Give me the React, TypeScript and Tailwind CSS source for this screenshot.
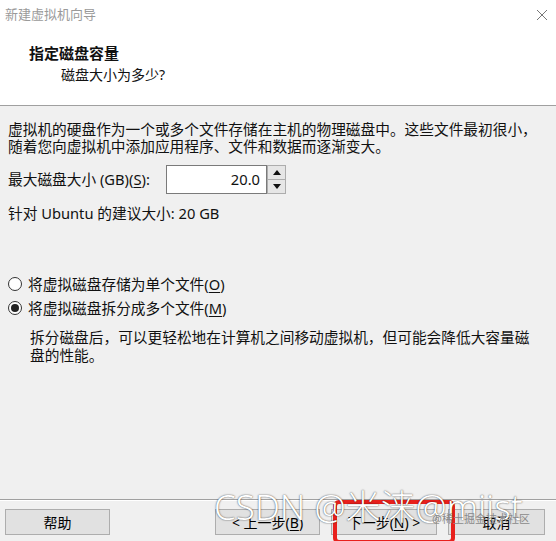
import React, { useState } from "react";

const FONT = "font-['Noto_Sans','Noto_Sans_CJK_SC',sans-serif]";

function Radio({ checked, label, hot }: { checked: boolean; label: string; hot: string }) {
	return (
		<div className="flex items-center h-[20px] gap-[6px] pl-[8px]">
			<span className="w-[14px] h-[14px] rounded-full border border-[#333] bg-white flex items-center justify-center">
				{checked && <span className="w-[8px] h-[8px] rounded-full bg-[#222]"></span>}
			</span>
			<span>
				{label}(<span className="underline underline-offset-2">{hot}</span>)
			</span>
		</div>
	);
}

function Btn({ children, className = "" }: { children: React.ReactNode; className?: string }) {
	return (
		<button className={`h-[26px] bg-[#e1e1e1] border border-[#adadad] text-[14px] text-black flex items-center justify-center ${className}`}>
			{children}
		</button>
	);
}

export default function App() {
	const [size] = useState("20.0");

	return (
		<div className={`relative w-[556px] h-[541px] bg-[#f0f0f0] flex flex-col overflow-hidden text-[#111] ${FONT}`}>
			{/* header */}
			<div className="bg-white h-[106px] border-b border-[#a0a0a0] flex flex-col">
				<div className="flex items-center justify-between h-[30px] pl-[5px] pr-[8px]">
					<span className="text-[13px] text-[#9a9a9a]">新建虚拟机向导</span>
					<svg width="12" height="12" viewBox="0 0 12 12" className="stroke-[#777]">
						<path d="M1 1 L11 11 M11 1 L1 11" strokeWidth="1" fill="none" />
					</svg>
				</div>
				<div className="pl-[29px] mt-[13px] text-[15px] font-bold leading-[20px]">指定磁盘容量</div>
				<div className="pl-[61px] mt-[2px] text-[14px] leading-[20px]">磁盘大小为多少?</div>
			</div>

			{/* body */}
			<div className="px-[8px] pt-[15px] text-[14.7px] leading-[17px]">
				<p>虚拟机的硬盘作为一个或多个文件存储在主机的物理磁盘中。这些文件最初很小，</p>
				<p>随着您向虚拟机中添加应用程序、文件和数据而逐渐变大。</p>

				<div className="flex items-center mt-[10px] h-[29px]">
					<span className="w-[158px]">
						最大磁盘大小 (GB)(<span className="underline underline-offset-2">S</span>):
					</span>
					<div className="h-[29px] w-[101px] bg-white border border-[#7a7a7a] flex items-center justify-end pr-[6px]">
						{size}
					</div>
					<div className="flex flex-col h-[29px] w-[19px] border border-[#adadad] bg-[#e6e6e6]">
						<div className="flex-1 flex items-center justify-center border-b border-[#adadad]">
							<svg width="8" height="5" viewBox="0 0 8 5">
								<path d="M0 5 L4 0 L8 5 Z" fill="#111" />
							</svg>
						</div>
						<div className="flex-1 flex items-center justify-center">
							<svg width="8" height="5" viewBox="0 0 8 5">
								<path d="M0 0 L4 5 L8 0 Z" fill="#111" />
							</svg>
						</div>
					</div>
				</div>

				<p className="mt-[11px]">针对 Ubuntu 的建议大小: 20 GB</p>
			</div>

			{/* options */}
			<div className="mt-[52px] text-[14.7px] flex flex-col gap-[4px]">
				<Radio checked={false} label="将虚拟磁盘存储为单个文件" hot="O" />
				<Radio checked={true} label="将虚拟磁盘拆分成多个文件" hot="M" />
			</div>
			<div className="pl-[30px] pr-[8px] mt-[10px] text-[14.7px] leading-[18px]">
				<p>拆分磁盘后，可以更轻松地在计算机之间移动虚拟机，但可能会降低大容量磁</p>
				<p>盘的性能。</p>
			</div>

			{/* footer */}
			<div className="mt-auto border-t border-[#a0a0a0]">
				<div className="border-t border-white flex items-center pt-[8px] pb-[6px] pl-[5px]">
					<Btn className="w-[105px]">帮助</Btn>
					<Btn className="w-[105px] ml-[105px]">&lt; 上一步(<span className="underline underline-offset-2">B</span>)</Btn>
					<Btn className="w-[106px] ml-[11px]">下一步(<span className="underline underline-offset-2">N</span>) &gt;</Btn>
					<Btn className="w-[97px] ml-[11px]">取消</Btn>
				</div>
			</div>

			{/* watermark + highlight */}
			<div className="absolute left-[333px] top-[500px] w-[122px] h-[44px] border-[4px] border-[#e8201c] rounded-[6px]"></div>
			<div className="absolute left-[214px] top-[484px] text-[35px] leading-[46px] font-light text-white whitespace-nowrap [text-shadow:0_0_2px_rgba(0,0,0,0.45),0_0_1px_rgba(0,0,0,0.5)]">
				CSDN @米涞@miist
			</div>
			<div className="absolute left-[432px] top-[511px] text-[11px] leading-[16px] text-[#8a8a8a] whitespace-nowrap">
				@稀土掘金技术社区
			</div>
		</div>
	);
}
